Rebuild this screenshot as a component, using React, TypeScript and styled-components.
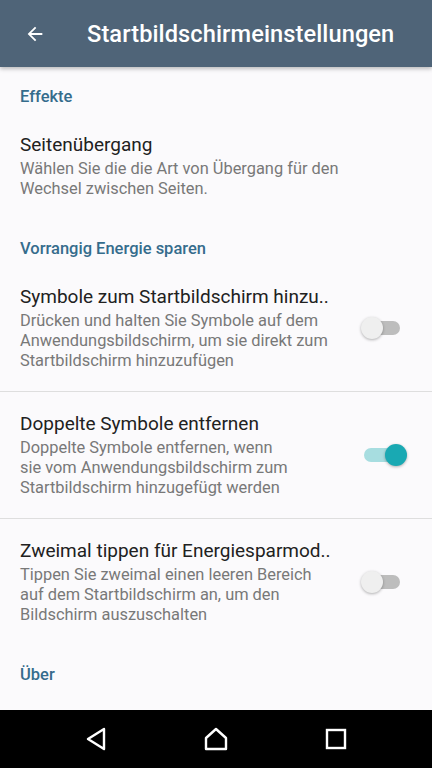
import styled, { createGlobalStyle } from "styled-components";

const colors = {
  bar: "#4f6478",
  bg: "#fbfafc",
  accent: "#356c8c",
  title: "#212121",
  muted: "#787878",
  divider: "#dedede",
  teal: "#19a9b3",
  tealTrack: "#a7dde0",
};

const GlobalStyle = createGlobalStyle`
  html, body {
    margin: 0;
    padding: 0;
    background: ${colors.bg};
  }
  body {
    font-family: Roboto, "Noto Sans", "Liberation Sans", sans-serif;
    -webkit-font-smoothing: antialiased;
  }
`;

const Screen = styled.div`
  width: 432px;
  height: 768px;
  display: flex;
  flex-direction: column;
  background: ${colors.bg};
  overflow: hidden;
`;

const AppBar = styled.header`
  height: 67px;
  flex-shrink: 0;
  background: ${colors.bar};
  display: flex;
  align-items: center;
  box-shadow: 0 2px 4px rgba(0, 0, 0, 0.25);
  position: relative;
  z-index: 1;
`;

const BackButton = styled.button`
  width: 87px;
  height: 67px;
  border: none;
  background: none;
  padding: 0 0 0 24px;
  display: flex;
  align-items: center;
  color: white;
  cursor: pointer;
`;

const BarTitle = styled.h1`
  margin: 0;
  font-size: 23.6px;
  font-weight: 500;
  color: white;
  letter-spacing: 0.1px;
`;

const List = styled.main`
  flex: 1;
  overflow: hidden;
`;

const Category = styled.div`
  padding: 20px 20px 6px;
  font-size: 16.5px;
  line-height: 20px;
  font-weight: 500;
  color: ${colors.accent};
`;

const Item = styled.div<{ $divider?: boolean }>`
  display: flex;
  align-items: center;
  padding: 20px 20px 20px;
  border-bottom: ${(p) => (p.$divider ? `1px solid ${colors.divider}` : "none")};
`;

const ItemText = styled.div`
  flex: 1;
  min-width: 0;
`;

const ItemTitle = styled.div`
  font-size: 19px;
  line-height: 24px;
  color: ${colors.title};
  margin-bottom: 2px;
  white-space: nowrap;
`;

const ItemLine = styled.div`
  font-size: 16.4px;
  line-height: 20px;
  color: ${colors.muted};
  white-space: nowrap;
`;

const Switch = styled.div<{ $on: boolean }>`
  position: relative;
  width: 36px;
  height: 14px;
  margin: 0 12px 0 8px;
  border-radius: 7px;
  flex-shrink: 0;
  background: ${(p) => (p.$on ? colors.tealTrack : "#bdbdbd")};
`;

const Thumb = styled.span<{ $on: boolean }>`
  position: absolute;
  top: -4px;
  left: ${(p) => (p.$on ? "21px" : "-3px")};
  width: 22px;
  height: 22px;
  border-radius: 50%;
  background: ${(p) => (p.$on ? colors.teal : "#efefef")};
  box-shadow: 0 1px 3px rgba(0, 0, 0, 0.3);
`;

const NavBar = styled.nav`
  height: 58px;
  flex-shrink: 0;
  background: #000;
  display: grid;
  grid-template-columns: repeat(3, 1fr);
  align-items: center;
  justify-items: center;
  padding: 0 36px;
`;

type Pref = {
  title: string;
  lines: string[];
  toggle?: boolean;
  divider?: boolean;
};

const sections: { name: string; items: Pref[] }[] = [
  {
    name: "Effekte",
    items: [
      {
        title: "Seitenübergang",
        lines: [
          "Wählen Sie die die Art von Übergang für den",
          "Wechsel zwischen Seiten.",
        ],
      },
    ],
  },
  {
    name: "Vorrangig Energie sparen",
    items: [
      {
        title: "Symbole zum Startbildschirm hinzu..",
        lines: [
          "Drücken und halten Sie Symbole auf dem",
          "Anwendungsbildschirm, um sie direkt zum",
          "Startbildschirm hinzuzufügen",
        ],
        toggle: false,
        divider: true,
      },
      {
        title: "Doppelte Symbole entfernen",
        lines: [
          "Doppelte Symbole entfernen, wenn",
          "sie vom Anwendungsbildschirm zum",
          "Startbildschirm hinzugefügt werden",
        ],
        toggle: true,
        divider: true,
      },
      {
        title: "Zweimal tippen für Energiesparmod..",
        lines: [
          "Tippen Sie zweimal einen leeren Bereich",
          "auf dem Startbildschirm an, um den",
          "Bildschirm auszuschalten",
        ],
        toggle: false,
      },
    ],
  },
  { name: "Über", items: [] },
];

function ArrowBack() {
  return (
    <svg width="22" height="22" viewBox="0 0 24 24" fill="currentColor">
      <path d="M20 11H7.83l5.59-5.59L12 4l-8 8 8 8 1.41-1.41L7.83 13H20v-2z" />
    </svg>
  );
}

function NavBack() {
  return (
    <svg width="24" height="26" viewBox="0 0 24 26" fill="none" stroke="white" strokeWidth="2.4" strokeLinejoin="round">
      <path d="M20 3L4 13l16 10z" />
    </svg>
  );
}

function NavHome() {
  return (
    <svg width="26" height="26" viewBox="0 0 26 26" fill="none" stroke="white" strokeWidth="2.4" strokeLinejoin="round">
      <path d="M3 12L13 3l10 9v11H3z" />
    </svg>
  );
}

function NavRecents() {
  return (
    <svg width="22" height="22" viewBox="0 0 22 22" fill="none" stroke="white" strokeWidth="2.4">
      <rect x="2" y="2" width="18" height="18" />
    </svg>
  );
}

export default function App() {
  return (
    <>
      <GlobalStyle />
      <Screen>
        <AppBar>
          <BackButton aria-label="Zurück">
            <ArrowBack />
          </BackButton>
          <BarTitle>Startbildschirmeinstellungen</BarTitle>
        </AppBar>
        <List>
          {sections.map((s) => (
            <section key={s.name}>
              <Category>{s.name}</Category>
              {s.items.map((it) => (
                <Item key={it.title} $divider={it.divider}>
                  <ItemText>
                    <ItemTitle>{it.title}</ItemTitle>
                    {it.lines.map((l) => (
                      <ItemLine key={l}>{l}</ItemLine>
                    ))}
                  </ItemText>
                  {it.toggle !== undefined && (
                    <Switch $on={it.toggle}>
                      <Thumb $on={it.toggle} />
                    </Switch>
                  )}
                </Item>
              ))}
            </section>
          ))}
        </List>
        <NavBar>
          <NavBack />
          <NavHome />
          <NavRecents />
        </NavBar>
      </Screen>
    </>
  );
}
